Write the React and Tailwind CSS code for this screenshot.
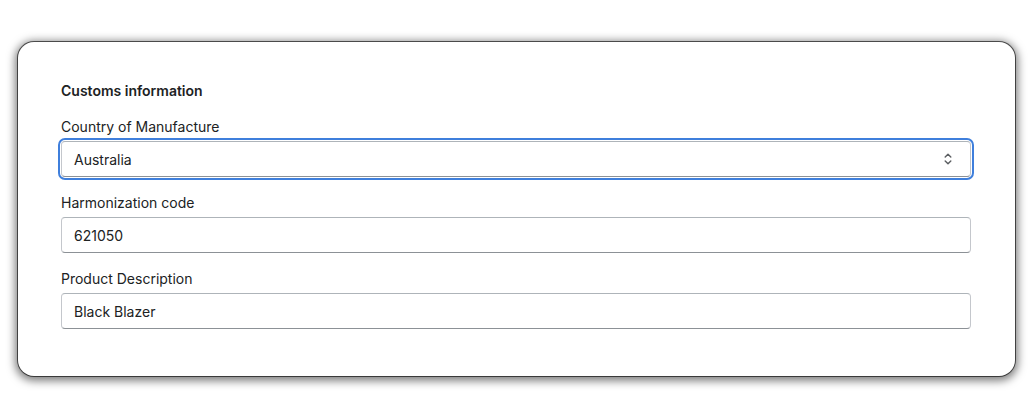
import React from "react";

const Field = ({ label, children }) => (
  <div className="flex flex-col">
    <label className="text-[14px] leading-5 text-[#202223] mb-1">{label}</label>
    {children}
  </div>
);

export default function App() {
  const inputCls =
    "h-9 w-full rounded-[4px] border border-[#c4c7cc] border-t-[#aeb4b9] border-b-[#8c9196] bg-white px-3 text-[14px] text-[#202223] outline-none";

  return (
    <div
      className="w-[1032px] h-[416px] bg-white pt-[42px] pl-[18px] pr-[17px]"
      style={{ fontFamily: "Inter, 'Noto Sans', sans-serif" }}
    >
      <div className="rounded-[16px] bg-white shadow-[0_0_0_1px_rgba(0,0,0,0.6),0_2px_8px_3px_rgba(0,0,0,0.5)] pl-[43px] pr-[44px] pt-[39px] pb-[47px]">
        <h2 className="text-[14px] leading-5 font-semibold text-[#202223] mb-4">
          Customs information
        </h2>
        <div className="flex flex-col gap-4">
          <Field label="Country of Manufacture">
            <div className="relative rounded-[4px] outline-2 outline-offset-1 outline-[#3f7fdc]">
              <div className={inputCls + " flex items-center justify-between"}>
                <span>Australia</span>
                <svg width="16" height="16" viewBox="0 0 20 20" className="mr-[2px] text-[#5c5f62]">
                  <path
                    d="M6.5 7.5L10 4l3.5 3.5M6.5 12.5L10 16l3.5-3.5"
                    fill="none"
                    stroke="currentColor"
                    strokeWidth="1.8"
                    strokeLinecap="round"
                    strokeLinejoin="round"
                  />
                </svg>
              </div>
            </div>
          </Field>
          <Field label="Harmonization code">
            <input className={inputCls} defaultValue="621050" />
          </Field>
          <Field label="Product Description">
            <input className={inputCls} defaultValue="Black Blazer" />
          </Field>
        </div>
      </div>
    </div>
  );
}
